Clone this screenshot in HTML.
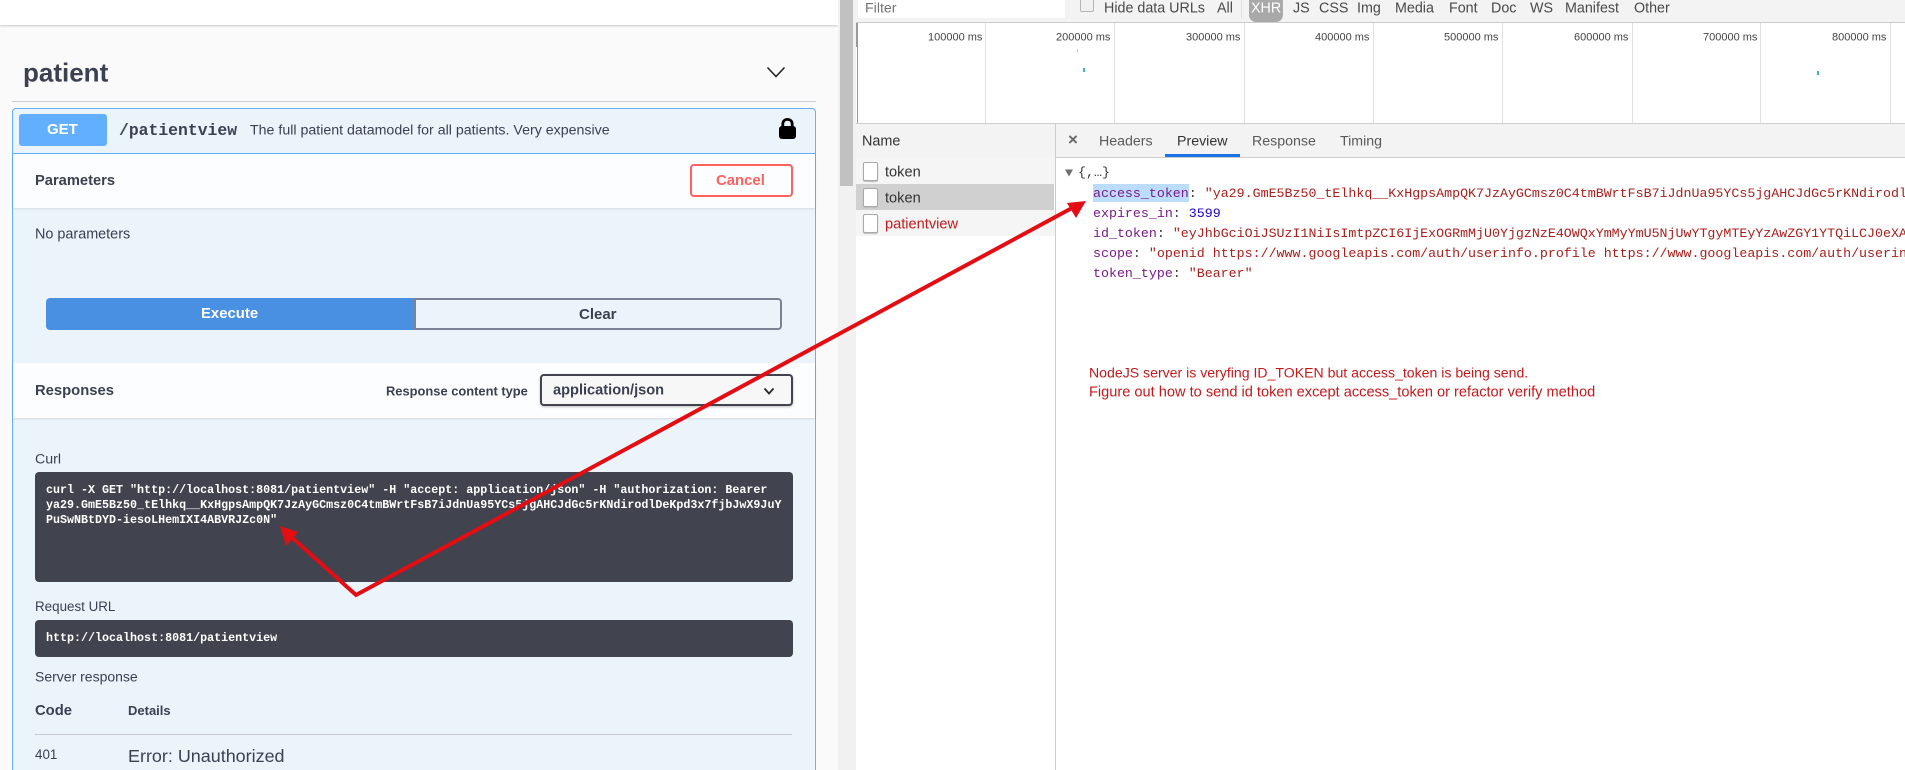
<!DOCTYPE html>
<html><head><meta charset="utf-8"><title>patient</title>
<style>
html,body{margin:0;padding:0;width:1905px;height:770px;overflow:hidden;background:#fff}
body{position:relative;font-family:"Liberation Sans",sans-serif}
div,span.t{position:absolute}
.t{white-space:nowrap;position:absolute;transform:translateY(-50%);line-height:1.2}
.b{font-weight:bold}
.sw{color:#3b4151}
.m{font-family:"Liberation Mono",monospace}
.code{color:#fff;font:bold 11.68px/15px "Liberation Mono",monospace;left:46px;white-space:nowrap;position:absolute}
.d{color:#4a4a4a;font-size:14.3px}
.tl{font-size:11px;color:#444;top:38px}
.j{font:13.3px/20px "Liberation Mono",monospace;left:1093px;white-space:nowrap;position:absolute;color:#7a1a8a}
.j i{font-style:normal;color:#a8201c}
.j b{font-weight:normal;color:#1c00cf}
.j u{text-decoration:none;color:#333}
.g{top:23px;width:1px;height:100px;background:#e0e0e0}
.ico{left:863px;width:13px;height:17px;background:#fff;border:1px solid #a9a9a9;border-radius:2px;box-shadow:0 1px 1px #bbb}
</style></head><body>
<!-- swagger bg -->
<div style="left:0;top:0;width:838px;height:770px;background:#fafafa"></div>
<div style="left:0;top:0;width:838px;height:25px;background:#fff;box-shadow:0 1px 2px rgba(0,0,0,.2)"></div>
<span class="t b sw" style="left:23px;top:73px;font-size:26px">patient</span>
<svg style="position:absolute;left:760px;top:60px" width="32" height="24"><path d="M7.5 7.5 L16 16.5 L24.5 7.5" fill="none" stroke="#222" stroke-width="1.6"/></svg>
<div style="left:12px;top:101px;width:804px;height:1px;background:#c9ccd1"></div>
<!-- opblock -->
<div style="left:12px;top:108px;width:802px;height:664px;background:#ebf3fb;border:1px solid #61affe;border-radius:4px 4px 0 0"></div>
<div style="left:13px;top:153px;width:802px;height:1px;background:#61affe"></div>
<div style="left:19px;top:114px;width:88px;height:32px;background:#61affe;border-radius:3px"></div>
<span class="t b" style="left:47px;top:130px;font-size:15px;color:#fff">GET</span>
<span class="t b m sw" style="left:119px;top:131px;font-size:16.4px">/patientview</span>
<span class="t sw" style="left:250px;top:131px;font-size:14.2px">The full patient datamodel for all patients. Very expensive</span>
<svg style="position:absolute;left:778px;top:117px" width="19" height="22"><path d="M4.8 10 V7 C4.8 0.8 14.2 0.8 14.2 7 V10" fill="none" stroke="#000" stroke-width="2.8"/><rect x="1" y="9" width="17" height="13" rx="3" fill="#000"/></svg>
<!-- parameters -->
<div style="left:13px;top:154px;width:802px;height:54px;background:#fcfdfe;box-shadow:0 1px 2px rgba(0,0,0,.1)"></div>
<span class="t b sw" style="left:35px;top:182px;font-size:14.7px">Parameters</span>
<div style="left:690px;top:164px;width:99px;height:29px;border:2px solid #ff6060;border-radius:4px;background:#fcfdfe"></div>
<span class="t b" style="left:716px;top:182px;font-size:14.9px;color:#ff6060">Cancel</span>
<span class="t sw" style="left:35px;top:235px;font-size:14.4px">No parameters</span>
<!-- buttons -->
<div style="left:46px;top:298px;width:368px;height:32px;background:#4990e2;border-radius:4px 0 0 4px"></div>
<div style="left:414px;top:298px;width:364px;height:28px;border:2px solid #7d8293;border-radius:0 4px 4px 0;background:#ebf3fb"></div>
<span class="t b" style="left:201px;top:315px;font-size:14.9px;color:#fff">Execute</span>
<span class="t b sw" style="left:579px;top:315px;font-size:15px">Clear</span>
<!-- responses header -->
<div style="left:13px;top:363px;width:802px;height:55px;background:#fcfdfe;box-shadow:0 1px 2px rgba(0,0,0,.1)"></div>
<span class="t b sw" style="left:35px;top:392px;font-size:14.8px">Responses</span>
<span class="t b sw" style="left:386px;top:391px;font-size:12.9px">Response content type</span>
<div style="left:540px;top:374px;width:249px;height:28px;border:2px solid #41444e;border-radius:4px;background:#f7f7f7;box-shadow:0 1px 2px rgba(0,0,0,.25)"></div>
<span class="t b sw" style="left:553px;top:391px;font-size:14.6px">application/json</span>
<svg style="position:absolute;left:760px;top:384px" width="18" height="14"><path d="M4.5 4.5 L9 9.5 L13.5 4.5" fill="none" stroke="#2a2a2a" stroke-width="1.8"/></svg>
<!-- curl -->
<span class="t sw" style="left:35px;top:460px;font-size:14.2px">Curl</span>
<div style="left:35px;top:472px;width:758px;height:110px;background:#41444e;border-radius:4px"></div>
<div class="code" style="top:483px">curl -X GET "http://localhost:8081/patientview" -H "accept: application/json" -H "authorization: Bearer</div>
<div class="code" style="top:498px">ya29.GmE5Bz50_tElhkq__KxHgpsAmpQK7JzAyGCmsz0C4tmBWrtFsB7iJdnUa95YCs5jgAHCJdGc5rKNdirodlDeKpd3x7fjbJwX9JuY</div>
<div class="code" style="top:513px">PuSwNBtDYD-iesoLHemIXI4ABVRJZc0N"</div>
<span class="t sw" style="left:35px;top:607px;font-size:13.4px">Request URL</span>
<div style="left:35px;top:620px;width:758px;height:37px;background:#41444e;border-radius:4px"></div>
<div class="code" style="top:631px">http://localhost:8081/patientview</div>
<span class="t sw" style="left:35px;top:677px;font-size:14px">Server response</span>
<span class="t b sw" style="left:35px;top:712px;font-size:14.8px">Code</span>
<span class="t b sw" style="left:128px;top:711px;font-size:13px">Details</span>
<div style="left:35px;top:734px;width:757px;height:1px;background:#c6c9cf"></div>
<span class="t sw" style="left:35px;top:755px;font-size:13.4px">401</span>
<span class="t sw" style="left:128px;top:757px;font-size:17.95px">Error: Unauthorized</span>
<!-- scrollbar -->
<div style="left:838px;top:0;width:18px;height:770px;background:#f1f1f1"></div>
<div style="left:840px;top:0;width:13px;height:186px;background:#c1c1c1"></div>
<!-- devtools toolbar -->
<div style="left:856px;top:0;width:1049px;height:22px;background:#f3f3f3;border-bottom:1px solid #ccc"></div>
<div style="left:858px;top:0;width:207px;height:18px;background:#fff"></div>
<span class="t" style="left:865px;top:9px;font-size:14.2px;color:#757575">Filter</span>
<div style="left:1080px;top:-3px;width:12px;height:13px;background:#f0f0f0;border:1px solid #b5b5b5;border-radius:2px"></div>
<span class="t d" style="left:1104px;top:9px">Hide data URLs</span>
<span class="t d" style="left:1217px;top:9px">All</span>
<div style="left:1241px;top:0;width:1px;height:18px;background:#ddd"></div>
<div style="left:1249px;top:0;width:34px;height:22px;background:#a9a9a9;border-radius:0 0 7px 7px"></div>
<span class="t d" style="left:1251px;top:9px;color:#fff">XHR</span>
<span class="t d" style="left:1293px;top:9px">JS</span>
<span class="t d" style="left:1319px;top:9px">CSS</span>
<span class="t d" style="left:1357px;top:9px">Img</span>
<span class="t d" style="left:1395px;top:9px">Media</span>
<span class="t d" style="left:1449px;top:9px">Font</span>
<span class="t d" style="left:1491px;top:9px">Doc</span>
<span class="t d" style="left:1530px;top:9px">WS</span>
<span class="t d" style="left:1565px;top:9px">Manifest</span>
<span class="t d" style="left:1634px;top:9px">Other</span>
<!-- timeline -->
<div style="left:856px;top:23px;width:1049px;height:100px;background:#fff;border-bottom:1px solid #ccc"></div>
<div style="left:856px;top:23px;width:2px;height:24px;background:#9a9a9a"></div>
<div style="left:857px;top:47px;width:1px;height:76px;background:#b98a94"></div>
<div class="g" style="left:985px"></div><div class="g" style="left:1114px"></div><div class="g" style="left:1244px"></div><div class="g" style="left:1373px"></div><div class="g" style="left:1502px"></div><div class="g" style="left:1632px"></div><div class="g" style="left:1760px"></div><div class="g" style="left:1890px"></div>
<span class="t tl" style="left:928px">100000 ms</span>
<span class="t tl" style="left:1056px">200000 ms</span>
<span class="t tl" style="left:1186px">300000 ms</span>
<span class="t tl" style="left:1315px">400000 ms</span>
<span class="t tl" style="left:1444px">500000 ms</span>
<span class="t tl" style="left:1574px">600000 ms</span>
<span class="t tl" style="left:1703px">700000 ms</span>
<span class="t tl" style="left:1832px">800000 ms</span>
<div style="left:1077px;top:49px;width:1px;height:3px;background:#c8c8c8"></div>
<div style="left:1083px;top:68px;width:2px;height:4px;background:#3fb5ad"></div>
<div style="left:1817px;top:71px;width:2px;height:4px;background:#3fb5ad"></div>
<!-- network panel -->
<div style="left:856px;top:124px;width:1049px;height:646px;background:#fff"></div>
<div style="left:856px;top:124px;width:1049px;height:33px;background:#f3f3f3;border-bottom:1px solid #ccc"></div>
<div style="left:1055px;top:124px;width:1px;height:646px;background:#ccc"></div>
<span class="t" style="left:862px;top:142px;font-size:14.4px;color:#333">Name</span>
<div style="left:856px;top:157px;width:199px;height:27px;background:#f5f5f5"></div>
<div style="left:856px;top:184px;width:198px;height:26px;background:#d0d0d0"></div>
<div style="left:856px;top:210px;width:199px;height:26px;background:#f5f5f5"></div>
<div class="ico" style="top:162px"></div><div class="ico" style="top:188px"></div><div class="ico" style="top:214px"></div>
<span class="t" style="left:885px;top:173px;font-size:14.6px;color:#333">token</span>
<span class="t" style="left:885px;top:199px;font-size:14.6px;color:#333">token</span>
<span class="t" style="left:885px;top:225px;font-size:14.6px;color:#c4191c">patientview</span>
<span class="t" style="left:1068px;top:140px;font-size:17px;color:#666;font-weight:bold">×</span>
<span class="t" style="left:1099px;top:142px;font-size:14.2px;color:#5a5a5a">Headers</span>
<span class="t" style="left:1177px;top:142px;font-size:14.2px;color:#333">Preview</span>
<span class="t" style="left:1252px;top:142px;font-size:14.2px;color:#5a5a5a">Response</span>
<span class="t" style="left:1340px;top:142px;font-size:14.2px;color:#5a5a5a">Timing</span>
<div style="left:1165px;top:154px;width:75px;height:3px;background:#1a73e8"></div>
<svg style="position:absolute;left:1064px;top:168px" width="10" height="10"><path d="M1 1.5 H9 L5 8.5 Z" fill="#6e6e6e"/></svg>
<div class="j" style="left:1078px;top:163px;color:#333">{,…}</div>
<div style="left:1093px;top:184px;width:96px;height:18px;background:#bcdcfb"></div>
<div class="j" style="top:184px;width:812px;overflow:hidden">access_token<u>: </u><i>"ya29.GmE5Bz50_tElhkq__KxHgpsAmpQK7JzAyGCmsz0C4tmBWrtFsB7iJdnUa95YCs5jgAHCJdGc5rKNdirodlDeKpd3x7fjbJwX9JuY"</i></div>
<div class="j" style="top:204px">expires_in<u>: </u><b>3599</b></div>
<div class="j" style="top:224px;width:812px;overflow:hidden">id_token<u>: </u><i>"eyJhbGciOiJSUzI1NiIsImtpZCI6IjExOGRmMjU0YjgzNzE4OWQxYmMyYmU5NjUwYTgyMTEyYzAwZGY1YTQiLCJ0eXAiOiJKV1QifQ"</i></div>
<div class="j" style="top:244px;width:812px;overflow:hidden">scope<u>: </u><i>"openid https://www.googleapis.com/auth/userinfo.profile https://www.googleapis.com/auth/userinfo.email"</i></div>
<div class="j" style="top:264px">token_type<u>: </u><i>"Bearer"</i></div>
<span class="t" style="left:1089px;top:373px;font-size:14.1px;color:#c4191c">NodeJS server is veryfing ID_TOKEN but access_token is being send.</span>
<span class="t" style="left:1089px;top:393px;font-size:14.6px;color:#c4191c">Figure out how to send id token except access_token or refactor verify method</span>
<!-- arrows -->
<svg style="position:absolute;left:0;top:0" width="1905" height="770">
<path d="M288 534 L356 595 L1072 208" fill="none" stroke="#e30d14" stroke-width="4"/>
<path d="M280 526 L298 532 L286 546 Z" fill="#e30d14"/>
<path d="M1086 201 L1067 203 L1076 218 Z" fill="#e30d14"/>
</svg>
</body></html>
